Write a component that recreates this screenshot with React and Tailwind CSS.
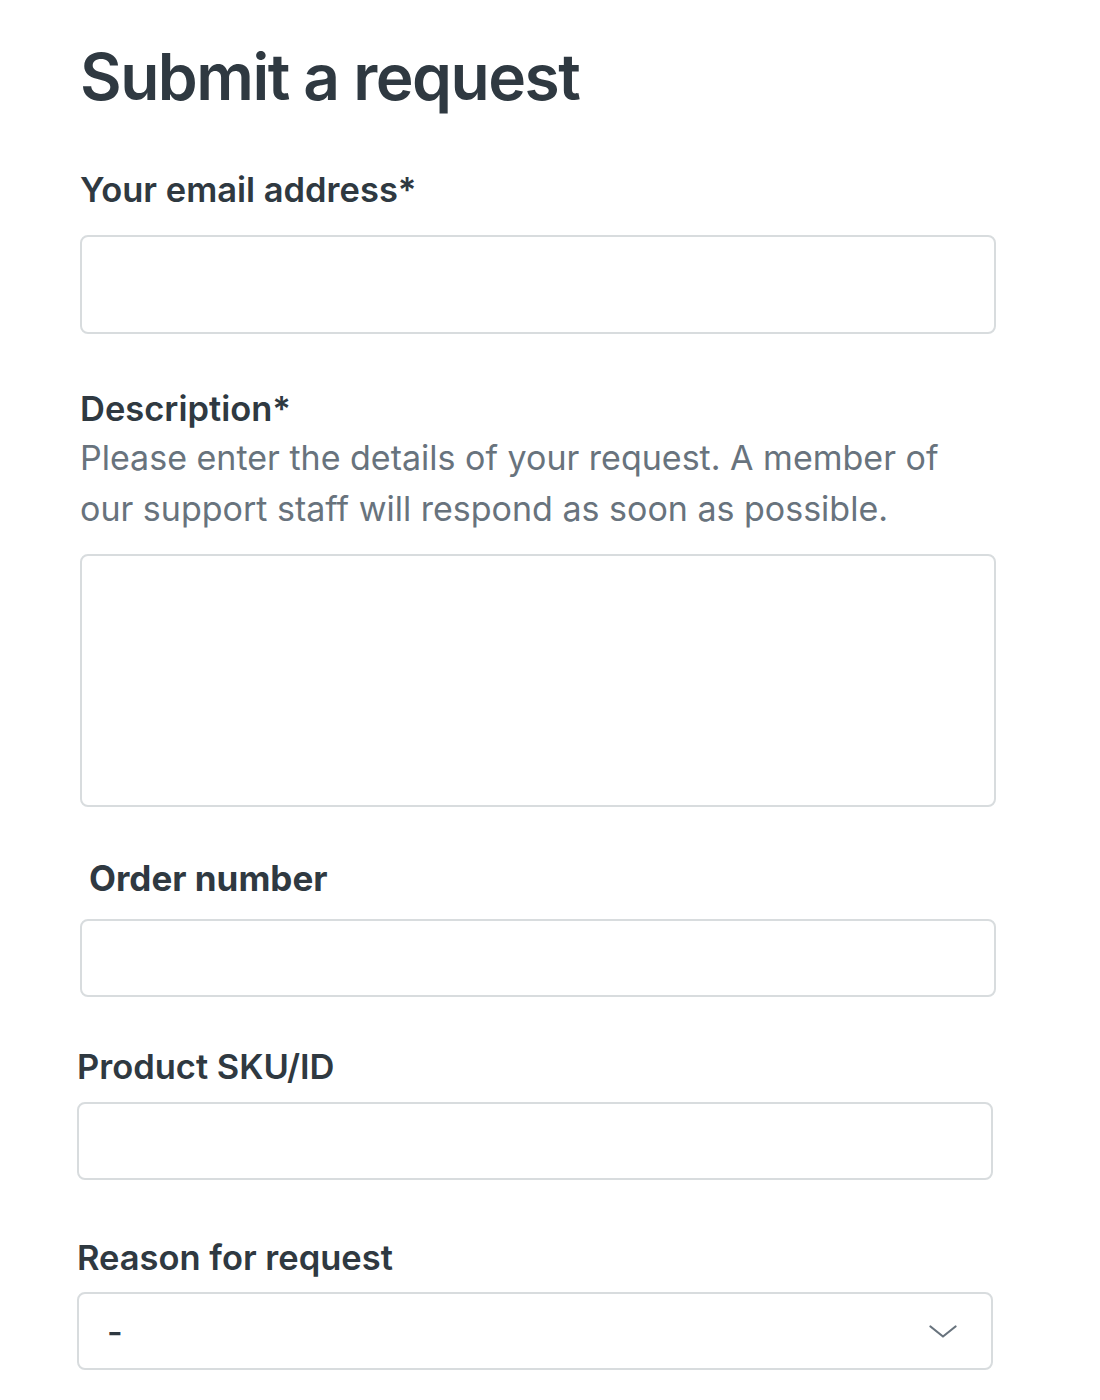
export default function App() {
  const label = "block text-[34.5px] leading-[40px] font-semibold text-[#2f3941]";
  const input = "block w-[916px] rounded-[8px] border-2 border-[#d8dcde] bg-white";

  return (
    <div
      className="min-h-[1400px] bg-white text-[#2f3941]"
      style={{ fontFamily: "Inter, 'Noto Sans', sans-serif" }}
    >
      <div className="pl-[80px] pt-[44px]">
        <h1 className="text-[64px] leading-[66px] font-semibold tracking-[-1.5px]">
          Submit a request
        </h1>

        {/* email */}
        <div className="mt-[60px]">
          <label className={label}>Your email address*</label>
          <input type="email" className={`${input} mt-[25px] h-[99px]`} />
        </div>

        {/* description */}
        <div className="mt-[55px]">
          <label className={label}>Description*</label>
          <p className="mt-[3px] w-[900px] text-[34px] leading-[51px] text-[#68737d]">
            Please enter the details of your request. A member of our support
            staff will respond as soon as possible.
          </p>
          <textarea className={`${input} mt-[20px] h-[253px] resize-none`} />
        </div>

        {/* order number */}
        <div className="mt-[51px]">
          <label className="block pl-[9px] text-[35px] leading-[40px] font-bold text-[#2f3941]">
            Order number
          </label>
          <input type="text" className={`${input} mt-[21px] h-[78px]`} />
        </div>

        {/* sku */}
        <div className="-ml-[3px] mt-[50px]">
          <label className={label}>Product SKU/ID</label>
          <input type="text" className={`${input} mt-[15px] h-[78px]`} />
        </div>

        {/* reason */}
        <div className="-ml-[3px] mt-[58px]">
          <label className={label}>Reason for request</label>
          <div className={`${input} mt-[14px] h-[78px] flex items-center justify-between pl-[28px] pr-[34px]`}>
            <span className="text-[34px] font-medium text-[#2f3941]">-</span>
            <svg width="28" height="13" viewBox="0 0 28 13" fill="none">
              <path
                d="M1.5 1.5 L14 11.5 L26.5 1.5"
                stroke="#68737d"
                strokeWidth="2.2"
                strokeLinecap="round"
                strokeLinejoin="round"
              />
            </svg>
          </div>
        </div>
      </div>
    </div>
  );
}
